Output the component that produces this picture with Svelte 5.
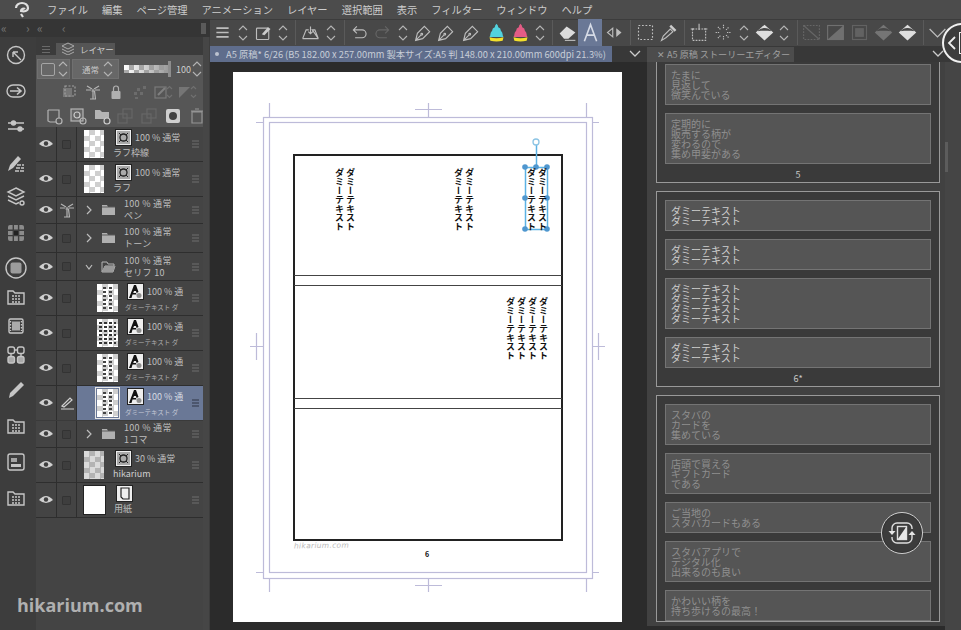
<script>
  const menus = ['ファイル', '編集', 'ページ管理', 'アニメーション', 'レイヤー', '選択範囲', '表示', 'フィルター', 'ウィンドウ', 'ヘルプ'];

  // toolbar: kind + slot width
  const tools = [
    ['menu', 24], ['chev', 18], ['stampbox', 22], ['chev', 18], ['sep', 6],
    ['tray', 24], ['chev', 18], ['sep', 8],
    ['undo', 22], ['redo', 24], ['chev', 18],
    ['pen', 22], ['pen', 24], ['pen', 26], ['cyan', 24], ['pink', 24], ['chev', 16], ['sep', 8],
    ['eraser', 22], ['text', 24], ['flip', 24], ['sep', 8],
    ['select', 22], ['dropper', 24], ['sep', 8],
    ['transform', 22], ['burst', 26], ['chev', 16], ['fill', 24], ['chev', 16], ['sep', 10],
    ['off1', 18], ['off2', 30], ['off3', 18], ['offfill', 30], ['fill', 18], ['sep', 14], ['down', 14]
  ];

  const layers = [
    { type: 'raster', mark: 'mask', pct: '100 % 通常', name: 'ラフ枠線' },
    { type: 'raster', mark: 'mask', pct: '100 % 通常', name: 'ラフ' },
    { type: 'folder', pct: '100 % 通常', name: 'ペン', tower: true, h: 27 },
    { type: 'folder', pct: '100 % 通常', name: 'トーン', h: 29 },
    { type: 'folder', open: true, pct: '100 % 通常', name: 'セリフ 10', h: 28 },
    { type: 'text', pct: '100 % 通', name: 'ダミーテキスト ダ' },
    { type: 'text', wide: true, pct: '100 % 通', name: 'ダミーテキスト ダ' },
    { type: 'text', pct: '100 % 通', name: 'ダミーテキスト ダ' },
    { type: 'text', active: true, pct: '100 % 通', name: 'ダミーテキスト ダ' },
    { type: 'folder', pct: '100 % 通常', name: '1コマ', h: 27 },
    { type: 'raster', mark: 'mask', faded: true, pct: '30 % 通常', name: 'hikarium' },
    { type: 'raster', mark: 'paper', paper: true, pct: '', name: '用紙' }
  ];

  const cards = [
    { no: '5', clipped: true, dim: true, boxes: [['たまに', '見返して', '微笑んでいる'], ['定期的に', '販売する柄が', '変わるので', '集め甲斐がある']] },
    { no: '6*', boxes: [['ダミーテキスト', 'ダミーテキスト'], ['ダミーテキスト', 'ダミーテキスト'], ['ダミーテキスト', 'ダミーテキスト', 'ダミーテキスト', 'ダミーテキスト'], ['ダミーテキスト', 'ダミーテキスト']] },
    { no: '', dim: true, boxes: [['スタバの', 'カードを', '集めている'], ['店頭で買える', 'ギフトカード', 'である'], ['ご当地の', 'スタバカードもある'], ['スタバアプリで', 'デジタル化', '出来るのも良い'], ['かわいい柄を', '持ち歩けるの最高！']] }
  ];

  const balloons = [
    { x: 334, y: 168, lines: ['ダミーテキスト', 'ダミーテキスト'] },
    { x: 453, y: 168, lines: ['ダミーテキスト', 'ダミーテキスト'] },
    { x: 526, y: 168, lines: ['ダミーテキスト', 'ダミーテキスト'] },
    { x: 505, y: 297, lines: ['ダミーテキスト', 'ダミーテキスト', 'ダミーテキスト', 'ダミーテキスト'] }
  ];

  const handles = [[525, 167], [536, 167], [547, 167], [525, 198], [547, 198], [525, 229], [547, 229]];
</script>

{#snippet chev()}
  <svg width="12" height="20" viewBox="0 0 12 20" fill="none" stroke="#b4b4b4" stroke-width="1.1"><path d="M2 7l4-4 4 4M2 13l4 4 4-4" /></svg>
{/snippet}

{#snippet tool(k)}
  <svg width="21" height="21" viewBox="0 0 24 24" fill="none" stroke="#bdbdbd" stroke-width="1.3">
    {#if k === 'menu'}
      <path d="M5 7h14M5 12h14M5 17h14" stroke-width="1.8" />
    {:else if k === 'stampbox'}
      <rect x="4" y="7" width="14" height="13" rx="1" /><path d="M10 14l7-8 3 2-7 7z" fill="#ccc" stroke="none" />
    {:else if k === 'tray'}
      <path d="M3 19l4-10h3M14 9h3l4 10zM3 19h18M12 5v8M9.500 11l2.500 2.500 2.500-2.500" />
    {:else if k === 'undo'}
      <path d="M9 5L5 9l4 4M5 9h10a4 4 0 0 1 0 9H7" />
    {:else if k === 'redo'}
      <path d="M15 5l4 4-4 4M19 9H9a4 4 0 0 0 0 9h8" stroke="#666" />
    {:else if k === 'pen'}
      <path d="M3 21l2-8 8-8 6 6-8 8zM3 21l6-6" /><circle cx="10" cy="14" r="1" />
    {:else if k === 'cyan' || k === 'pink'}
      <path d="M12 2q2 2 2 4 3 1 3 4 2 2 2 4t1 3H4q1-1 1-3t2-4q0-3 3-4 0-2 2-4z" fill={k === 'cyan' ? '#52d2de' : '#e35c85'} stroke="none" />
      <path d="M4 17.500q8 2 16 0l-1 4q-7 1.500-14 0z" fill="#f2df2b" stroke="none" />
    {:else if k === 'eraser'}
      <path d="M3 13l8-8 10 7-8 7H8z" fill="#dcdcdc" stroke="none" /><path d="M9 21h12" />
    {:else if k === 'text'}
      <path d="M5 22L12 3l7 19M7.500 15h9" stroke="#d6dbe6" stroke-width="1.800" />
    {:else if k === 'flip'}
      <path d="M10 7L4 12l6 5z" /><path d="M14 7l6 5-6 5z" fill="#bdbdbd" stroke="none" />
    {:else if k === 'select'}
      <rect x="4" y="4" width="16" height="16" stroke-dasharray="2 2" />
    {:else if k === 'dropper'}
      <path d="M4 21l2-5 8-8 3 3-8 7z" /><path d="M15 3l6 6-2 2-6-6z" fill="#ccc" stroke="none" />
    {:else if k === 'transform'}
      <rect x="4" y="8" width="15" height="13" stroke-dasharray="2 1.400" /><path d="M11.500 2v7M2 8h4M17 8h4" />
    {:else if k === 'burst'}
      <path d="M12 3v5M12 16v5M3 12h5M16 12h5M5.600 5.600l3.500 3.500M14.900 14.900l3.500 3.500M5.600 18.400l3.500-3.500M14.900 9.100l3.500-3.500" stroke-dasharray="1.500 1" />
    {:else if k === 'fill'}
      <path d="M12 3l10 9-10 9-10-9z" fill="#dedede" stroke="none" /><path d="M5 10q7-5 14 0" stroke="#484848" fill="#484848" />
    {:else if k === 'offfill'}
      <path d="M12 3l10 9-10 9-10-9z" fill="#757575" stroke="none" /><path d="M5 10q7-5 14 0" stroke="#484848" fill="#484848" />
    {:else if k === 'off1'}
      <rect x="3" y="4" width="18" height="16" stroke="#666" stroke-dasharray="2 1.500" /><path d="M3 4l18 16" stroke="#666" />
    {:else if k === 'off2'}
      <rect x="3" y="4" width="18" height="16" stroke="#707070" /><path d="M21 4v16H3z" fill="#707070" stroke="none" />
    {:else if k === 'off3'}
      <rect x="4" y="4" width="16" height="16" stroke="#626262" /><rect x="7" y="7" width="10" height="10" fill="#626262" stroke="none" />
    {:else if k === 'down'}
      <path d="M3 8l9 9 9-9" stroke-width="1.400" />
    {/if}
  </svg>
{/snippet}

{#snippet rail(k)}
  <svg width="24" height="24" viewBox="0 0 24 24" fill="none" stroke="#c6c6c6" stroke-width="1.400">
    {#if k === 0}
      <circle cx="12" cy="12" r="8.500" /><path d="M9 9l8 8M9 9v5M9 9h5" />
    {:else if k === 1}
      <path d="M9 6h6a6 6 0 0 1 0 12H9A6 6 0 0 1 9 6z" /><path d="M6 12h11M13 8.500l4 3.500-4 3.500" stroke-width="1.600" />
    {:else if k === 2}
      <path d="M4 9h4M12 9h8M4 15h10M18 15h2" /><circle cx="9.500" cy="9" r="2" fill="#c6c6c6" /><circle cx="16" cy="15" r="2" fill="#c6c6c6" />
    {:else if k === 3}
      <path d="M4 21l2-6 8-9 3 3-8 9z" fill="#c6c6c6" stroke="none" /><path d="M13 15h7M12 18h8M11 21h9" stroke-dasharray="4 1" />
    {:else if k === 4}
      <path d="M12 3l8 4-8 4-8-4zM4 11l8 4 8-4M4 15l8 4 3-1.500" /><circle cx="18" cy="18" r="2" />
    {:else if k === 5}
      <rect x="4" y="4" width="16" height="16" rx="2" fill="#8b8b8b" stroke="none" /><path d="M4 9.300h16M4 14.600h16M9.300 4v16M14.600 4v16" stroke="#3d3d3d" /><rect x="10" y="10" width="4" height="4" fill="#222" stroke="none" />
    {:else if k === 6}
      <circle cx="12" cy="12" r="10" /><rect x="6.500" y="6.500" width="11" height="11" rx="2" fill="#9c9c9c" stroke="none" />
    {:else if k === 7 || k === 11 || k === 13}
      <path d="M4 19V6h5l2 2h9v11z" /><path d="M8 11h2M11 11h2M14 11h2M8 14h2M11 14h2M14 14h2M8 17h2M11 17h2M14 17h2" stroke-width="1.300" />
    {:else if k === 8}
      <rect x="5" y="5" width="14" height="14" rx="1.500" /><rect x="8" y="7.500" width="8" height="9" fill="#aaa" stroke="none" /><path d="M6.500 7v10M17.500 7v10" stroke-dasharray="1.500 1.500" />
    {:else if k === 9}
      <rect x="4" y="4" width="6.500" height="6.500" rx="2" /><rect x="13.500" y="4" width="6.500" height="6.500" rx="2" /><rect x="4" y="13.500" width="6.500" height="6.500" rx="2" fill="#aaa" /><rect x="13.500" y="13.500" width="6.500" height="6.500" rx="2" fill="#aaa" /><path d="M10.500 7h3M7 10.500v3M17 10.500v3" />
    {:else if k === 10}
      <path d="M5 20l1-5L17 4l3 3L9 18z" fill="#c6c6c6" stroke="none" />
    {:else if k === 12}
      <rect x="4" y="4" width="16" height="16" rx="2" /><path d="M7 9h6M7 11h6" /><rect x="7" y="14" width="10" height="3" fill="#c6c6c6" stroke="none" />
    {/if}
  </svg>
{/snippet}

{#snippet eye()}
  <svg width="14" height="10" viewBox="0 0 14 10"><path d="M0 5q7-8 14 0q-7 6-14 0z" fill="#d0d0d0" /><circle cx="7" cy="4.500" r="2.200" fill="#3f3f3f" /></svg>
{/snippet}

{#snippet panelIcon(k)}
  <svg width="20" height="20" viewBox="0 0 20 20" fill="none" stroke="#a0a0a0" stroke-width="1.200">
    {#if k === 'clip'}
      <rect x="4" y="6" width="9" height="9" fill="#777" stroke="none" /><rect x="6" y="4" width="10" height="10" stroke-dasharray="2 1.500" />
    {:else if k === 'tower'}
      <path d="M10 7v10M7 17h6M8.500 9h3l1 8M4 4l5 3M16 4l-5 3M3 8h5M12 8h5" stroke="#b4b4b4" />
    {:else if k === 'lock'}
      <rect x="5.500" y="9" width="9" height="8" rx="1" fill="#b0b0b0" stroke="none" /><path d="M7.500 9V6.500a2.500 2.500 0 0 1 5 0V9" stroke="#b0b0b0" />
    {:else if k === 'check'}
      <path d="M7 6h3v3H7zM13 4h3v3h-3zM4 10h3v3H4zM10 10h3v3h-3zM5 15h3v2H5z" fill="#6c6c6c" stroke="none" />
    {:else if k === 'offa'}
      <rect x="2" y="5" width="11" height="11" stroke="#7a7a7a" /><path d="M5 13l7-7" stroke="#808080" stroke-width="2" /><path d="M14 7l2.500-2.500L19 7M14 13l2.500 2.500L19 13" stroke="#707070" />
    {:else if k === 'offb'}
      <path d="M2 5h11L2 16z" fill="#757575" stroke="none" /><path d="M14 7l2.500-2.500L19 7M14 13l2.500 2.500L19 13" stroke="#707070" />
    {:else if k === 'newr'}
      <path d="M4 4h11v8M4 4v11l2 1h6" stroke="#b4b4b4" /><circle cx="15" cy="15" r="3" stroke="#b4b4b4" />
    {:else if k === 'newt'}
      <rect x="3" y="3" width="12" height="12" fill="#666" stroke="#b4b4b4" /><circle cx="9" cy="9" r="3" stroke="#ccc" /><circle cx="15" cy="15" r="3" stroke="#b4b4b4" />
    {:else if k === 'newf'}
      <path d="M3 15V4h5l2 2h7v7H3z" fill="#b4b4b4" stroke="none" /><circle cx="15" cy="15" r="3" stroke="#ccc" fill="#555" />
    {:else if k === 'offc'}
      <rect x="3" y="8" width="9" height="9" stroke="#676767" /><rect x="8" y="3" width="9" height="9" stroke="#676767" />
    {:else if k === 'maskb'}
      <rect x="3" y="3" width="14" height="14" rx="2" fill="#cfcfcf" stroke="none" /><circle cx="10" cy="10" r="4" fill="#444" stroke="none" />
    {:else if k === 'trash'}
      <path d="M5 6h10v11H5zM4 5h12M8 3h4" stroke="#949494" />
    {/if}
  </svg>
{/snippet}

<div class="app">
  <header class="menubar">
    <svg class="logo" width="18" height="18" viewBox="0 0 18 18" fill="none" stroke="#dedede" stroke-width="2.200"><path d="M3 7a6 5 0 0 1 12 0c0 3-4 4-7 3 0-2 3-3 4-2M8 13l2 3" /></svg>
    {#each menus as m}<span>{m}</span>{/each}
  </header>

  <div class="workspace">
    <aside class="left">
      <div class="strip">
        <span>«</span><span class="s2">›</span><span>«</span><span class="s3">‹</span>
        <i class="grip"></i>
      </div>
      <div class="left-body">
        <nav class="rail">
          <div class="rail-group">{#each [0, 1, 2, 3, 4, 5, 6] as k}{@render rail(k)}{/each}</div>
          <div class="rail-group tight">{#each [7, 8, 9] as k}{@render rail(k)}{/each}</div>
          <div class="rail-group last">{#each [10, 11, 12, 13] as k}{@render rail(k)}{/each}</div>
        </nav>
        <section class="layers">
          <div class="tabrow">
            <div class="tabmenu"><b></b><b></b><b></b></div>
            <div class="tab">
              <svg width="14" height="14" viewBox="0 0 14 14" fill="none" stroke="#aaa"><path d="M7 1l6 3-6 3-6-3zM1 7l6 3 6-3M1 10l6 3 6-3" /></svg>
              レイヤー
            </div>
          </div>
          <div class="controls">
            <div class="ctl-row first">
              <div class="btn colorbtn"><i class="swatch"></i>{@render chev()}</div>
              <div class="btn blendbtn"><span>通常</span>{@render chev()}</div>
              <div class="opacity"><i></i></div>
              <span class="opnum">100</span>{@render chev()}
            </div>
            <div class="ctl-row second">
              {@render panelIcon('clip')}{@render panelIcon('tower')}{@render panelIcon('lock')}{@render panelIcon('check')}{@render panelIcon('offa')}{@render panelIcon('offb')}
            </div>
            <div class="ctl-row third">
              {@render panelIcon('newr')}{@render panelIcon('newt')}{@render panelIcon('newf')}{@render panelIcon('offc')}{@render panelIcon('offc')}{@render panelIcon('maskb')}{@render panelIcon('trash')}
            </div>
          </div>
          <div class="list">
            {#each layers as l}
              <div class="row" class:active={l.active} style:height={l.h ? `${l.h}px` : null}>
                <div class="c-eye">{@render eye()}</div>
                <div class="c-check">
                  {#if l.active}
                    <svg width="16" height="14" viewBox="0 0 16 14" fill="none" stroke="#cfcfcf" stroke-width="1.200"><path d="M2 13h13M3 10l8-8 2 2-8 7z" /></svg>
                  {:else if l.tower}
                    {@render panelIcon('tower')}
                  {:else}
                    <i class="box"></i>
                  {/if}
                </div>
                <div class="c-main {l.type}">
                  {#if l.type === 'folder'}
                    <svg class="caret" width="8" height="10" viewBox="0 0 8 10" fill="none" stroke="#bdbdbd" stroke-width="1.200">
                      {#if l.open}<path d="M1 3l3 4 3-4" />{:else}<path d="M2 1l4 4-4 4" />{/if}
                    </svg>
                    <svg class="fold-ico" width="15" height="12" viewBox="0 0 15 12">
                      {#if l.open}
                        <path d="M1 11V1h5l1 2h6v2H4L1 11h11l2-6" fill="none" stroke="#b4b4b4" /><path d="M1 11l3-6h10l-2 6z" fill="#999" />
                      {:else}
                        <path d="M1 11V1h5l1 2h7v8z" fill="#b0b0b0" /><path d="M1 3h13" stroke="#5a5a5a" />
                      {/if}
                    </svg>
                    <div class="meta"><div>{l.pct}</div><div>{l.name}</div></div>
                  {:else}
                    <div class="thumb" class:checker={!l.paper} class:papered={l.paper} class:lined={l.type === 'text'} class:wide={l.wide} class:faded={l.faded}></div>
                    <div class="meta">
                      <div class="top">
                        <span class="mark">
                          {#if l.type === 'text'}
                            <svg width="15" height="15" viewBox="0 0 15 15"><path d="M1 14L6 1h2l2.500 7-2 1L8 7H6l-.800 2H8l.500 1.500h-4L3.500 14z" fill="#111" /><circle cx="11" cy="11.500" r="2.500" fill="#8e8e8e" /></svg>
                          {:else if l.mark === 'paper'}
                            <svg width="15" height="15" viewBox="0 0 15 15" fill="none" stroke="#222" stroke-width="1.200"><path d="M4 2h8v11H6l-2-2z" /></svg>
                          {:else}
                            <svg width="15" height="15" viewBox="0 0 15 15"><rect x="1" y="1" width="13" height="13" fill="#aaa" /><circle cx="7.500" cy="7.500" r="3.500" fill="none" stroke="#222" stroke-width="1.300" /><path d="M3 3l2 2M12 3l-2 2M3 12l2-2M12 12l-2-2" stroke="#222" /></svg>
                          {/if}
                        </span>
                        <span>{l.pct}</span>
                      </div>
                      <div class="lname" class:faded-name={l.faded}>{l.name}</div>
                    </div>
                  {/if}
                  <div class="grab"><b></b><b></b><b></b></div>
                </div>
              </div>
            {/each}
          </div>
          <div class="mark-text">hikarium.com</div>
        </section>
      </div>
    </aside>

    <main class="right">
      <div class="toolbar">
        {#each tools as [k, w]}
          <div class="tool" class:on={k === 'text'} class:rule={k === 'sep'} style:width="{w}px">
            {#if k === 'chev'}{@render chev()}{:else if k !== 'sep'}{@render tool(k)}{/if}
          </div>
        {/each}
      </div>
      <div class="tabbar">
        <div class="doc-tab"><i></i>A5 原稿* 6/26 (B5 182.00 x 257.00mm 製本サイズ:A5 判 148.00 x 210.00mm 600dpi 21.3%)</div>
        <svg class="tabdown" width="12" height="8" viewBox="0 0 12 8" fill="none" stroke="#ccc" stroke-width="1.300"><path d="M1 1l5 5 5-5" /></svg>
        <div class="story-tab">✕ A5 原稿 ストーリーエディター</div>
        <svg class="tabdown2" width="12" height="8" viewBox="0 0 12 8" fill="none" stroke="#ccc" stroke-width="1.300"><path d="M1 1l5 5 5-5" /></svg>
      </div>
      <div class="panes">
        <div class="canvas">
          <div class="page">
            <svg class="guides" width="389" height="550" viewBox="233 72 389 550" fill="none">
              <g stroke="#bdbbd9" stroke-width="1.200">
                <rect x="263.500" y="117.500" width="329" height="461" />
                <rect x="269.500" y="122.500" width="317" height="450" />
                <path d="M269.500 103v14M586.500 103v14M256 122.500h7M592 122.500h7M269.500 578v14M586.500 578v14M256 572.500h7M592 572.500h7" />
                <path d="M428.500 103v14M415 109.500h27M428.500 578v14M415 585.500h27M256.500 333v27M250 346.500h13M598.500 333v27M592 346.500h13" />
              </g>
              <rect x="294" y="155" width="268" height="385" stroke="#222" stroke-width="2" />
              <path d="M294 275.500h268M294 285.500h268M294 398.500h268M294 408.500h268" stroke="#444" />
              <g fill="#fff" stroke="#5cb2e4">
                <rect x="525.500" y="167.500" width="22" height="62" fill="none" stroke-width="1.500" />
                <path d="M536.500 145v22" stroke-width="1.500" />
                <circle cx="536" cy="142" r="3" stroke="#8cc4e4" stroke-width="1.300" />
              </g>
              {#each handles as [x, y]}<circle cx={x} cy={y} r="2.800" fill="#4f97cf" />{/each}
            </svg>
            {#each balloons as b}
              <div class="balloon" style:left="{b.x - 233}px" style:top="{b.y - 72}px">
                {#each b.lines as line}<div>{line}</div>{/each}
              </div>
            {/each}
            <span class="sign">hikarium.com</span>
            <span class="folio">6</span>
          </div>
        </div>
        <div class="editor">
          {#each cards as c}
            <div class="card" class:clipped={c.clipped}>
              {#each c.boxes as lines}
                <div class="para" class:dim={c.dim}>
                  {#each lines as t}<div>{t}</div>{/each}
                </div>
              {/each}
              {#if c.no}<div class="no">{c.no}</div>{/if}
            </div>
          {/each}
        </div>
        <div class="scrolltrack"><i></i></div>
      </div>
    </main>
  </div>

  <div class="float swap">
    <svg width="30" height="30" viewBox="0 0 30 30" fill="none" stroke="#dedede" stroke-width="1.400">
      <path d="M5 13V10a5 5 0 0 1 5-5h10a5 5 0 0 1 5 5v1M25 17v3a5 5 0 0 1-5 5H10a5 5 0 0 1-5-5v-1" />
      <path d="M1.500 13h7L5 17zM21.500 17h7L25 13z" fill="#e6e6e6" stroke="none" />
      <rect x="10.500" y="8.500" width="9" height="13" /><path d="M19.500 8.500v13h-9z" fill="#e6e6e6" stroke="none" />
    </svg>
  </div>
  <div class="float dock">
    <svg width="10" height="14" viewBox="0 0 10 14" fill="none" stroke="#eee" stroke-width="1.800"><path d="M8 1L2 7l6 6" /></svg>
    <i></i>
  </div>
</div>

<style>
  :global(body) {
    margin: 0;
    background: #2b2b2b;
  }

  .app {
    position: relative;
    width: 961px;
    height: 630px;
    overflow: hidden;
    display: flex;
    flex-direction: column;
    background: #2b2b2b;
    color: #c8c8c8;
    font-family: "Noto Sans CJK JP", "Noto Sans", sans-serif;
  }

  svg {
    display: block;
    flex: none;
  }

  .menubar {
    height: 19px;
    flex: none;
    display: flex;
    align-items: center;
    gap: 14px;
    padding-left: 13px;
    background: #4c4c4c;
    font-size: 10.250px;
    color: #cdcdcd;
    white-space: nowrap;
  }

  .logo {
    margin-right: 2px;
  }

  .workspace {
    flex: 1;
    min-height: 0;
    display: flex;
  }

  /* left side */
  .left {
    width: 210px;
    flex: none;
    display: flex;
    flex-direction: column;
    background: #3d3d3d;
  }

  .strip {
    height: 18px;
    flex: none;
    display: flex;
    align-items: center;
    padding-left: 1px;
    background: #353535;
    color: #767676;
    font-size: 12px;
    line-height: 1;
  }

  .strip span {
    width: 12px;
  }

  .strip .s2 {
    margin-left: 13px;
    width: 11px;
  }

  .strip .s3 {
    margin-left: 13px;
  }

  .grip {
    width: 5px;
    height: 11px;
    margin-left: auto;
    margin-right: 4px;
    background: #5a5a5a;
  }

  .left-body {
    flex: 1;
    min-height: 0;
    display: flex;
  }

  .rail {
    width: 36px;
    flex: none;
    display: flex;
    flex-direction: column;
    align-items: center;
    padding-top: 6px;
    box-sizing: border-box;
  }

  .rail-group {
    display: flex;
    flex-direction: column;
    gap: 11.500px;
    margin-left: -4px;
  }

  .rail-group.tight {
    gap: 5px;
    margin-top: 5px;
  }

  .rail-group.last {
    gap: 12px;
    margin-top: 11px;
  }

  .layers {
    position: relative;
    flex: 1;
    display: flex;
    flex-direction: column;
    min-width: 0;
    background: #444;
    border-right: 6px solid #464646;
    box-sizing: border-box;
    margin-right: 1px;
  }

  .tabrow {
    height: 18px;
    flex: none;
    display: flex;
    align-items: flex-end;
    background: #3b3b3b;
  }

  .tabmenu {
    width: 20px;
    height: 12px;
    display: flex;
    flex-direction: column;
    justify-content: center;
    align-items: center;
    gap: 2px;
  }

  .tabmenu b {
    width: 8px;
    height: 1px;
    background: #6a6a6a;
  }

  .tab {
    width: 59px;
    height: 12px;
    display: flex;
    align-items: center;
    gap: 5px;
    padding-left: 5px;
    box-sizing: border-box;
    background: #555;
    font-size: 8.500px;
    color: #cccccc;
    white-space: nowrap;
  }

  .controls {
    height: 72px;
    flex: none;
    background: #565656;
    box-sizing: border-box;
  }

  .ctl-row {
    display: flex;
    align-items: center;
  }

  .ctl-row.first {
    height: 25px;
    padding: 3px 0 0 1px;
    box-sizing: border-box;
  }

  .btn {
    height: 20px;
    display: flex;
    align-items: center;
    box-sizing: border-box;
    background: #676767;
    border: 1px solid #707070;
  }

  .colorbtn {
    width: 33px;
    padding-left: 3px;
    gap: 2px;
  }

  .swatch {
    width: 13px;
    height: 11px;
    border: 1px solid #a5a5a5;
    border-radius: 2px;
  }

  .blendbtn {
    width: 49px;
    margin-left: 2px;
    padding: 0 4px 0 9px;
    justify-content: space-between;
    font-size: 8.500px;
    color: #c8c8c8;
  }

  .opacity {
    position: relative;
    width: 47px;
    height: 8px;
    margin-left: 5px;
    background:
      linear-gradient(90deg, transparent, #9a9a9a),
      repeating-conic-gradient(#aaa 0 25%, #fff 0 50%) 0 0 / 10px 10px;
  }

  .opacity i {
    position: absolute;
    right: -2px;
    top: -4px;
    width: 3px;
    height: 16px;
    background: #8e8e8e;
  }

  .opnum {
    margin-left: 7px;
    font-size: 9px;
    color: #cfcfcf;
  }

  .ctl-row.second {
    height: 24px;
    gap: 3.600px;
    padding-left: 23px;
  }

  .ctl-row.third {
    height: 23px;
    gap: 3.800px;
    padding-left: 8px;
  }

  .list {
    display: flex;
    flex-direction: column;
  }

  .row {
    height: 35px;
    display: flex;
    box-sizing: border-box;
    border-bottom: 1px solid #2e2e2e;
  }

  .c-eye {
    width: 21px;
    flex: none;
    display: flex;
    align-items: center;
    justify-content: center;
    border-right: 1px solid #2e2e2e;
    box-sizing: border-box;
  }

  .c-check {
    width: 20px;
    flex: none;
    display: flex;
    align-items: center;
    justify-content: center;
    border-right: 1px solid #2e2e2e;
    box-sizing: border-box;
  }

  .box {
    width: 7px;
    height: 7px;
    border: 1px solid #333;
    background: #3e3e3e;
    border-radius: 1px;
  }

  .c-main {
    position: relative;
    flex: 1;
    min-width: 0;
    display: flex;
    align-items: center;
    font-size: 9px;
    line-height: 12px;
    color: #bebebe;
    white-space: nowrap;
  }

  .c-main.raster {
    padding-left: 7px;
  }

  .c-main.text {
    padding-left: 20px;
  }

  .row.active {
    border-bottom-color: #3a3a3a;
  }

  .row.active .c-main {
    background: #6a7896;
    color: #d5d9e2;
  }

  .caret {
    margin-left: 8px;
  }

  .fold-ico {
    margin-left: 8px;
  }

  .c-main.folder .meta {
    margin-left: 8px;
    margin-top: 0;
    letter-spacing: 0.300px;
  }

  .thumb {
    position: relative;
    width: 20px;
    height: 28px;
    flex: none;
    background: #fff;
  }

  .checker {
    background: repeating-conic-gradient(#cfcfcf 0 25%, #fff 0 50%) 0 0 / 11px 11px;
  }

  .papered {
    width: 21px;
    outline: 1px solid #222;
  }

  .checker.faded {
    opacity: 0.8;
  }

  /* small dashes standing in for the balloon text in the layer preview */
  .lined::before {
    content: "";
    position: absolute;
    inset: 3px 2px;
    background: linear-gradient(90deg, transparent 0 22%, #444 22% 42%, transparent 42% 58%, #444 58% 78%, transparent 78%);
    mask-image: repeating-linear-gradient(0deg, #000 0 2px, transparent 2px 4px);
  }

  .lined.wide::before {
    background: repeating-linear-gradient(90deg, #333 0 3px, transparent 3px 5px);
  }

  .row.active .thumb {
    outline: 1px solid #e6e6e6;
    outline-offset: 1px;
  }

  .c-main.text .thumb {
    width: 21px;
  }

  .c-main .meta {
    margin-left: 9px;
    min-width: 0;
  }

  .c-main.text .meta {
    margin-left: 7px;
    width: 57px;
  }

  .top {
    display: flex;
    align-items: center;
    gap: 4px;
    margin-left: 3px;
    height: 17px;
  }

  .mark {
    width: 15px;
    height: 15px;
    flex: none;
    background: #eee;
    outline: 1px solid #222;
  }

  .lname {
    margin-top: 1px;
  }

  .c-main.text .lname {
    font-size: 6.500px;
    color: #b0b0b0;
  }

  .row.active .c-main.text .lname {
    color: #c5cad6;
  }

  .faded-name {
    color: #cfcfcf;
  }

  .grab {
    position: absolute;
    right: 4px;
    top: 50%;
    transform: translateY(-50%);
    display: flex;
    flex-direction: column;
    gap: 2px;
  }

  .grab b {
    width: 7px;
    height: 1px;
    background: #6e6e6e;
  }

  .row.active .grab b {
    background: #2f3545;
  }

  .mark-text {
    position: absolute;
    left: -19px;
    top: 556px;
    font-family: "Open Sans", sans-serif;
    font-size: 18px;
    font-weight: 700;
    line-height: 24px;
    color: #b0b0b0;
  }

  /* right side */
  .right {
    flex: 1;
    min-width: 0;
    display: flex;
    flex-direction: column;
  }

  .toolbar {
    height: 27px;
    flex: none;
    display: flex;
    align-items: center;
    background: #484848;
    box-shadow: inset 0 1px 0 #3c3c3c;
  }

  .tool {
    height: 27px;
    flex: none;
    display: flex;
    align-items: center;
    justify-content: center;
    overflow: visible;
  }

  .tool.on {
    background: #6a7896;
  }

  .tool.rule {
    position: relative;
  }

  .tool.rule::after {
    content: "";
    width: 1px;
    height: 25px;
    background: #5a5a5a;
  }

  .tabbar {
    position: relative;
    height: 16px;
    flex: none;
    display: flex;
    align-items: flex-end;
    background: #383838;
  }

  .doc-tab {
    width: 402px;
    height: 16px;
    display: flex;
    align-items: center;
    gap: 7px;
    padding-left: 5px;
    box-sizing: border-box;
    background: #5f6d8c;
    font-size: 9.300px;
    color: #c8cdd8;
    white-space: nowrap;
    overflow: hidden;
  }

  .doc-tab i {
    width: 4px;
    height: 4px;
    border-radius: 50%;
    background: #bcc2d0;
    flex: none;
  }

  .tabdown {
    margin: 0 0 4px 17px;
  }

  .tabdown2 {
    margin: 0 0 4px 138px;
  }

  .story-tab {
    width: 147px;
    height: 15px;
    margin-left: 6px;
    padding-left: 10px;
    box-sizing: border-box;
    background: #4c4c4c;
    font-size: 9.100px;
    line-height: 15px;
    color: #a0a0a0;
    white-space: nowrap;
    overflow: hidden;
  }

  .panes {
    flex: 1;
    min-height: 0;
    display: flex;
  }

  .canvas {
    width: 437px;
    flex: none;
    padding: 10px 0 0 23px;
    box-sizing: border-box;
    background: #2b2b2b;
  }

  .page {
    position: relative;
    width: 389px;
    height: 550px;
    background: #fff;
  }

  .guides {
    position: absolute;
    inset: 0;
  }

  .balloon {
    position: absolute;
    writing-mode: vertical-rl;
    font-size: 9px;
    font-weight: 700;
    line-height: 11px;
    color: #111;
    white-space: nowrap;
  }

  .sign {
    position: absolute;
    left: 61px;
    top: 469px;
    font-family: "DejaVu Sans", sans-serif;
    font-size: 7.500px;
    font-style: oblique;
    letter-spacing: 0.300px;
    color: #bbb;
    transform: rotate(-1deg);
  }

  .folio {
    position: absolute;
    left: 192px;
    top: 477px;
    font-size: 7px;
    font-weight: 700;
    color: #111;
  }

  .editor {
    width: 298px;
    flex: none;
    height: 564px;
    padding: 0 5px 0 9px;
    box-sizing: border-box;
    display: flex;
    flex-direction: column;
    gap: 8px;
    overflow: hidden;
    background: #414141;
  }

  .card {
    flex: none;
    display: flex;
    flex-direction: column;
    gap: 8px;
    padding: 8px 8px 0;
    border: 1px solid #999;
    box-sizing: border-box;
    background: #3a3a3a;
  }

  .card.clipped {
    border-top: 0;
    padding-top: 2px;
  }

  .para {
    padding: 5px 5px 4px;
    border: 1px solid #747474;
    box-sizing: border-box;
    background: #555;
    font-size: 10px;
    line-height: 10px;
    color: #cfcfcf;
    white-space: nowrap;
  }

  .para.dim {
    color: #8f8f8f;
  }

  .no {
    height: 10px;
    margin-top: -2px;
    margin-bottom: 2px;
    text-align: center;
    font-size: 9px;
    line-height: 10px;
    color: #c9c9c9;
  }

  .scrolltrack {
    flex: 1;
    background: #454545;
    padding-top: 80px;
  }

  .scrolltrack i {
    display: block;
    width: 3px;
    height: 30px;
    background: #5c5c5c;
  }

  .float {
    position: absolute;
    box-sizing: border-box;
    border-radius: 50%;
    display: flex;
    align-items: center;
    justify-content: center;
    background: #3c3c3c;
  }

  .swap {
    left: 881px;
    top: 512px;
    width: 42px;
    height: 42px;
    border: 1px solid #cfcfcf;
    box-shadow: inset 0 0 0 1px #333;
  }

  .dock {
    left: 942px;
    top: 23px;
    width: 40px;
    height: 40px;
    justify-content: flex-start;
    gap: 2px;
    padding-left: 3px;
    border: 2px solid #f0f0f0;
  }

  .dock i {
    width: 8px;
    height: 22px;
    border: 1.500px solid #eee;
    box-sizing: border-box;
  }
</style>
